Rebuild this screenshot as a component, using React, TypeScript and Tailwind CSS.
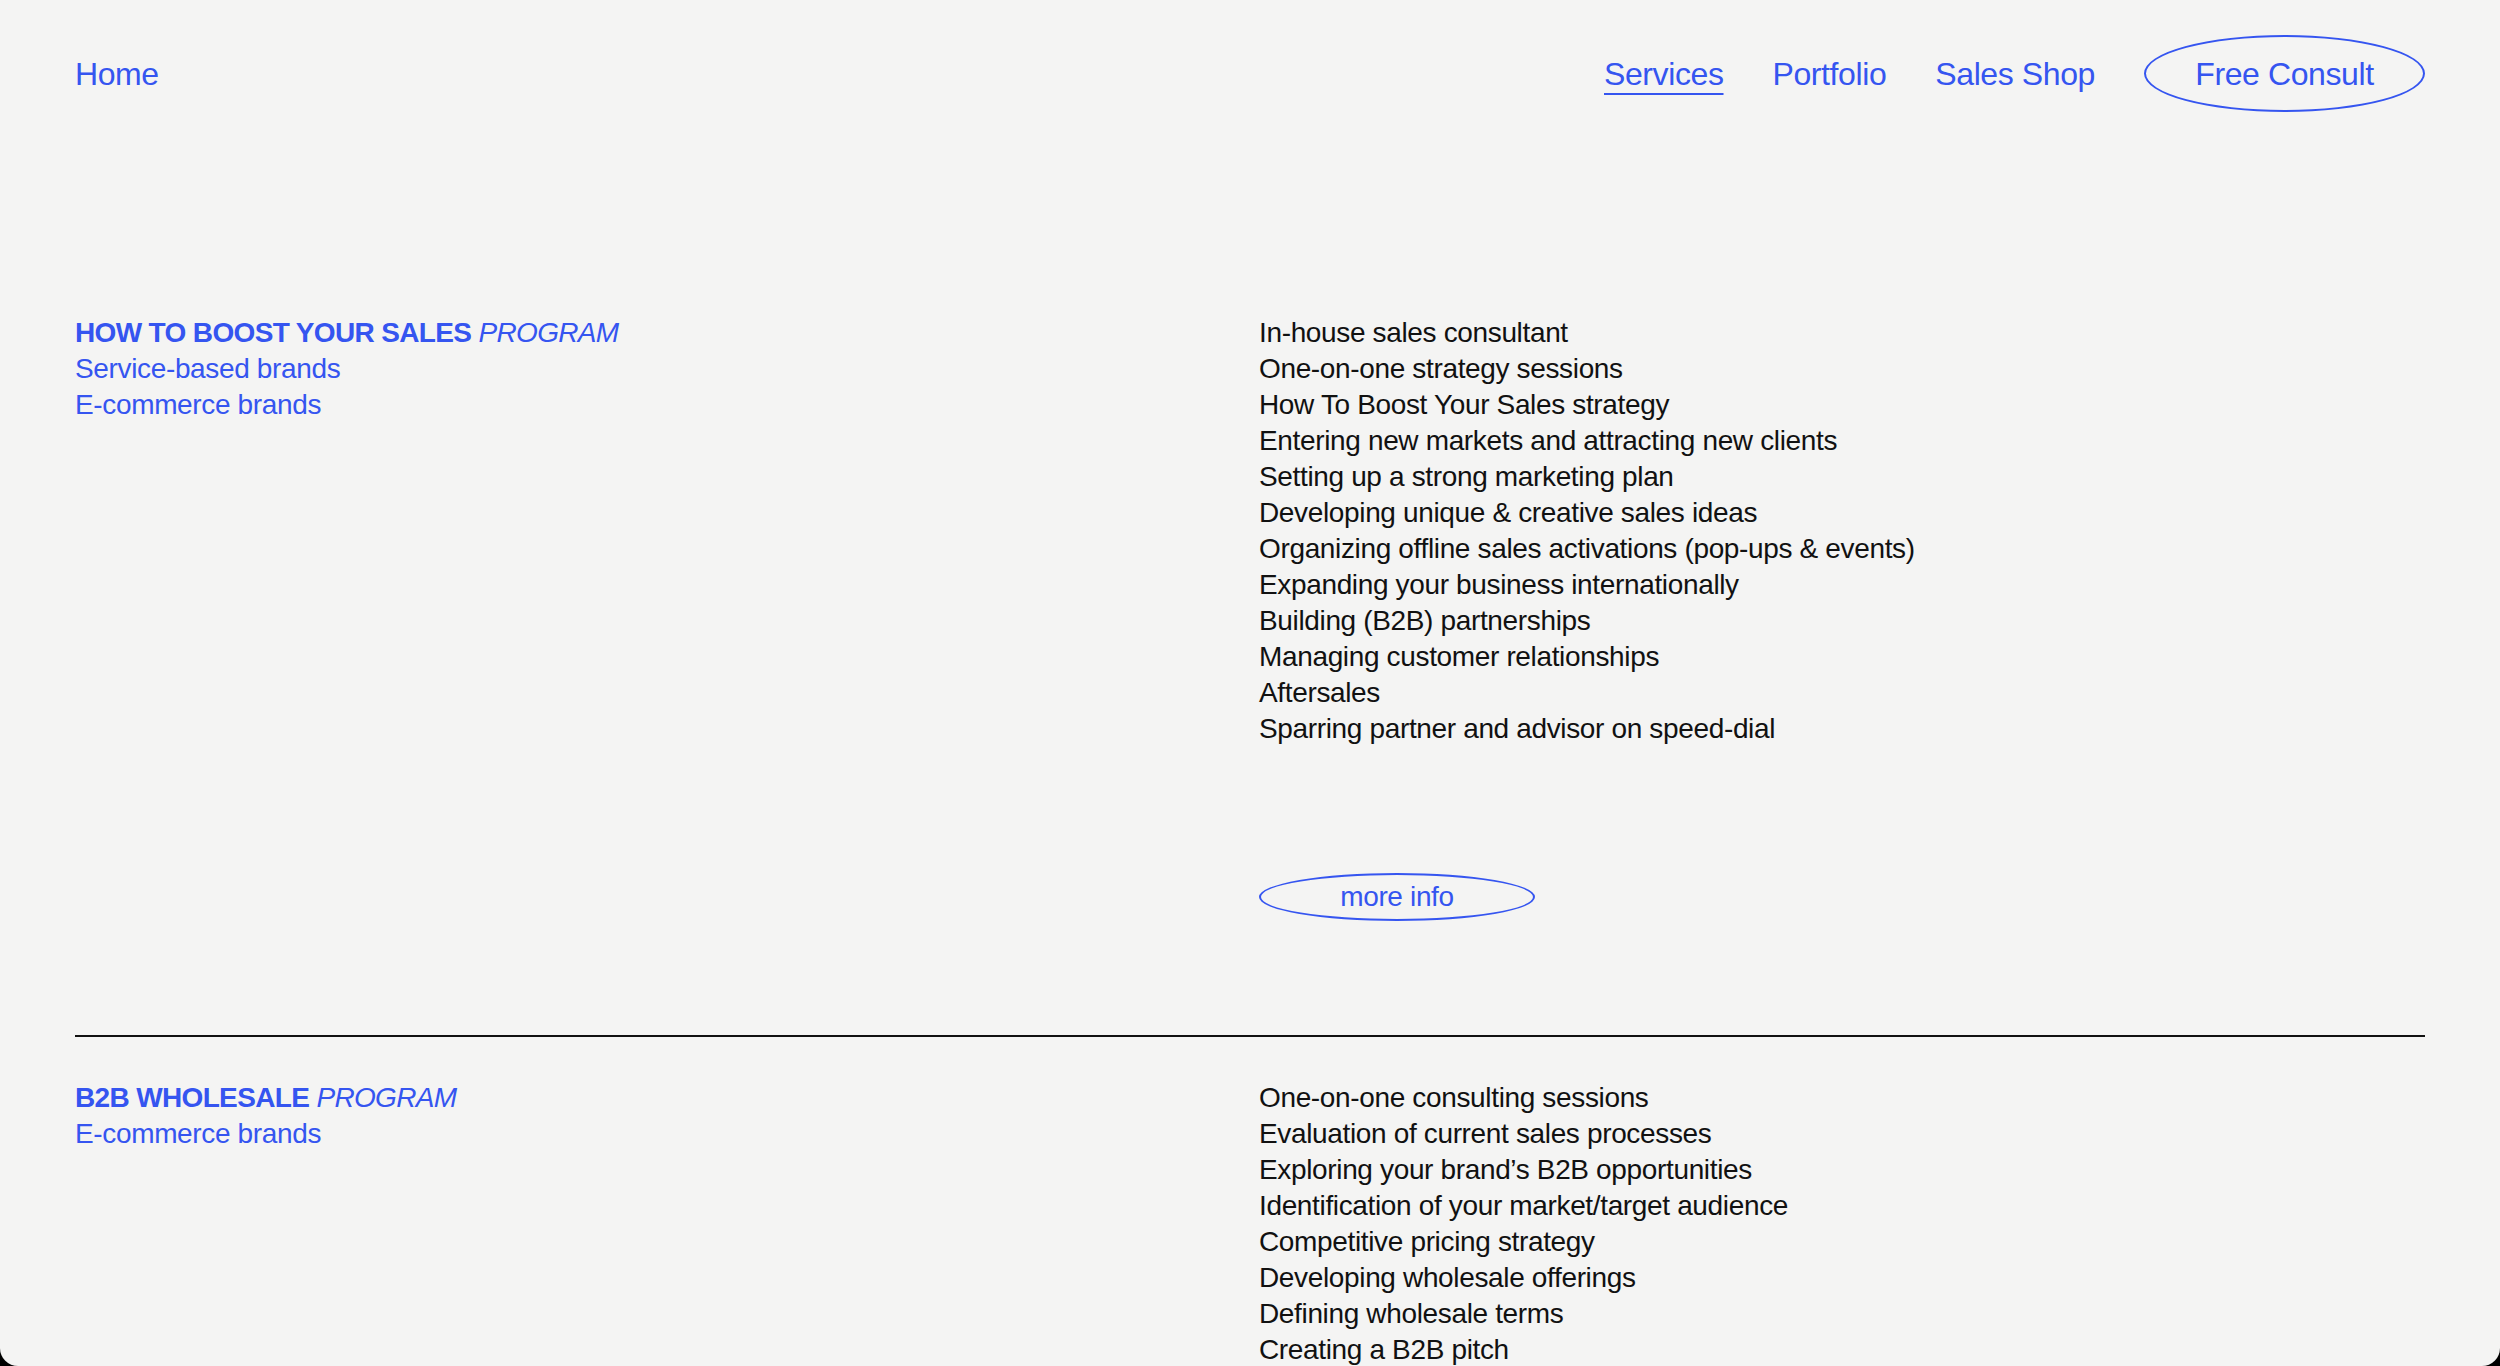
const nav = ["Services", "Portfolio", "Sales Shop"];

const programs = [
  {
    title: "HOW TO BOOST YOUR SALES",
    audiences: ["Service-based brands", "E-commerce brands"],
    items: [
      "In-house sales consultant",
      "One-on-one strategy sessions",
      "How To Boost Your Sales strategy",
      "Entering new markets and attracting new clients",
      "Setting up a strong marketing plan",
      "Developing unique & creative sales ideas",
      "Organizing offline sales activations (pop-ups & events)",
      "Expanding your business internationally",
      "Building (B2B) partnerships",
      "Managing customer relationships",
      "Aftersales",
      "Sparring partner and advisor on speed-dial",
    ],
    more: true,
  },
  {
    title: "B2B WHOLESALE",
    audiences: ["E-commerce brands"],
    items: [
      "One-on-one consulting sessions",
      "Evaluation of current sales processes",
      "Exploring your brand’s B2B opportunities",
      "Identification of your market/target audience",
      "Competitive pricing strategy",
      "Developing wholesale offerings",
      "Defining wholesale terms",
      "Creating a B2B pitch",
    ],
    more: false,
  },
];

function Program({ p }: { p: (typeof programs)[number] }) {
  return (
    <section className="grid grid-cols-[1184px_1fr] text-[28px] leading-[36px] tracking-[-0.35px]">
      <div className="text-[#3555f0]">
        <h2 className="tracking-[-0.65px]">
          <span className="font-bold">{p.title}</span> <span className="italic">PROGRAM</span>
        </h2>
        {p.audiences.map((a) => (
          <p key={a}>{a}</p>
        ))}
      </div>
      <div>
        <ul className="text-[#111111]">
          {p.items.map((i) => (
            <li key={i}>{i}</li>
          ))}
        </ul>
        {p.more ? (
          <button className="mt-[126px] flex h-[48px] w-[276px] items-center justify-center rounded-[50%] border-2 border-[#3555f0] text-[28px] text-[#3555f0]">
            more info
          </button>
        ) : null}
      </div>
    </section>
  );
}

export default function App() {
  return (
    <div className="h-[1366px] overflow-hidden bg-black font-['Liberation_Sans',Arial,sans-serif]">
      <div className="h-full overflow-hidden rounded-b-[18px] bg-[#f4f4f3] px-[75px]">
        <header className="mt-[35px] flex h-[77px] items-center justify-between text-[32px] tracking-[-0.4px] text-[#3555f0]">
          <a href="#">Home</a>
          <nav className="flex items-center gap-[49px]">
            {nav.map((n, idx) => (
              <a
                key={n}
                href="#"
                className={idx === 0 ? "underline decoration-[2px] underline-offset-[8px]" : ""}
              >
                {n}
              </a>
            ))}
            <a
              href="#"
              className="flex h-[77px] w-[281px] items-center justify-center rounded-[50%] border-2 border-[#3555f0]"
            >
              Free Consult
            </a>
          </nav>
        </header>

        <main className="mt-[203px]">
          <Program p={programs[0]} />
          <hr className="mt-[114px] mb-[43px] border-t-2 border-[#111111]" />
          <Program p={programs[1]} />
        </main>
      </div>
    </div>
  );
}
